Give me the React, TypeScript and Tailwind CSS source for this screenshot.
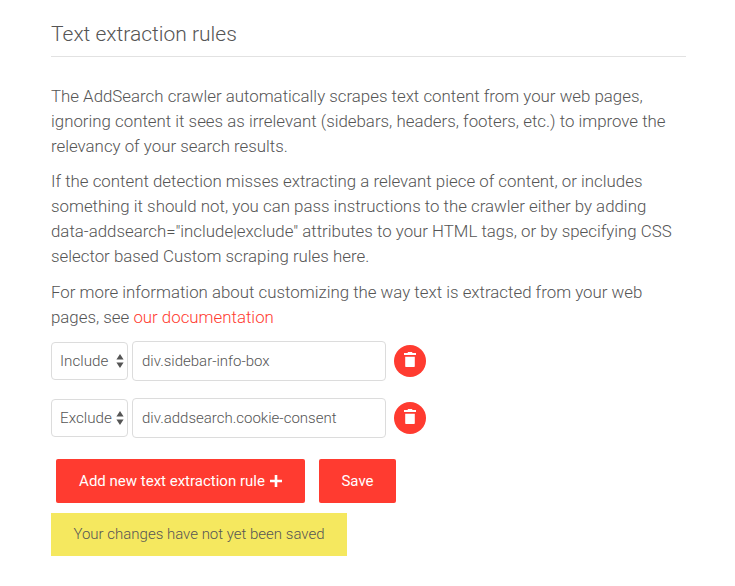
function TrashIcon() {
  return (
    <svg viewBox="0 0 12 15" className="w-[12px] h-[15px] mb-[4px]" fill="white">
      <path d="M4 0h4l.5 1H12v2H0V1h3.5L4 0z" />
      <path d="M1.2 4.8h9.6v9.2c0 .6-.4 1-1 1H2.2c-.6 0-1-.4-1-1V4.8z" />
    </svg>
  )
}

function PlusIcon() {
  return (
    <svg viewBox="0 0 12 12" className="w-[12px] h-[12px] shrink-0" fill="white">
      <path d="M4.7 0h2.6v4.7H12v2.6H7.3V12H4.7V7.3H0V4.7h4.7z" />
    </svg>
  )
}

function Rule({ kind, value }: { kind: string; value: string }) {
  return (
    <div className="flex items-center h-[40px]">
      <div className="w-[77px] h-[38px] border border-[#dcdcdc] rounded-[4px] flex items-center justify-between pl-[8px] pr-[3px] text-[15.2px] text-[#555555]">
        <span>{kind}</span>
        <svg viewBox="0 0 8 14" className="w-[8px] h-[14px] shrink-0" fill="#555555">
          <path d="M4 0l3.6 5.6H.4zM4 14L.4 8.4h7.2z" />
        </svg>
      </div>
      <div className="ml-[4px] w-[254px] h-[40px] border border-[#dcdcdc] rounded-[4px] flex items-center pl-[9px] text-[15px] text-[#555555]">
        {value}
      </div>
      <button className="ml-[8px] w-[32px] h-[32px] rounded-full bg-[#ff3b30] flex items-center justify-center">
        <TrashIcon />
      </button>
    </div>
  )
}

export default function App() {
  return (
    <main className="w-[735px] h-[586px] overflow-hidden bg-white px-[51px] pt-[20px] font-['Roboto',sans-serif] text-[#555555] font-light">
      <h2 className="text-[21px] leading-[28px] pb-[8px] border-b border-[#e2e2e2] w-[635px] text-[#555555]">
        Text extraction rules
      </h2>

      <div className="mt-[27px] text-[16.85px] leading-[25px] w-[635px]">
        <p>
          The AddSearch crawler automatically scrapes text content from your web pages, ignoring content it sees as
          irrelevant (sidebars, headers, footers, etc.) to improve the relevancy of your search results.
        </p>
        <p className="mt-[10px]">
          If the content detection misses extracting a relevant piece of content, or includes something it should not,
          you can pass instructions to the crawler either by adding{' '}
          <span className="whitespace-nowrap">data-addsearch="include|exclude"</span> attributes to your HTML tags, or
          by specifying CSS selector based Custom scraping rules here.
        </p>
        <p className="mt-[11px]">
          For more information about customizing the way text is extracted from your web pages, see{' '}
          <a className="text-[#ff3b30]">our documentation</a>
        </p>
      </div>

      <div className="mt-[11px] flex flex-col gap-[17px]">
        <Rule kind="Include" value="div.sidebar-info-box" />
        <Rule kind="Exclude" value="div.addsearch.cookie-consent" />
      </div>

      <div className="mt-[21px] ml-[5px] flex gap-[14px] font-normal">
        <button className="h-[44px] w-[249px] bg-[#ff3b30] rounded-[2px] text-white text-[15px] flex items-center justify-center gap-[5px]">
          Add new text extraction rule
          <PlusIcon />
        </button>
        <button className="h-[44px] w-[77px] bg-[#ff3b30] rounded-[2px] text-white text-[15px]">Save</button>
      </div>

      <div className="mt-[10px] w-[296px] h-[43px] bg-[#f5e85f] flex items-center justify-center text-[15px] text-[#555555]">
        Your changes have not yet been saved
      </div>
    </main>
  )
}
